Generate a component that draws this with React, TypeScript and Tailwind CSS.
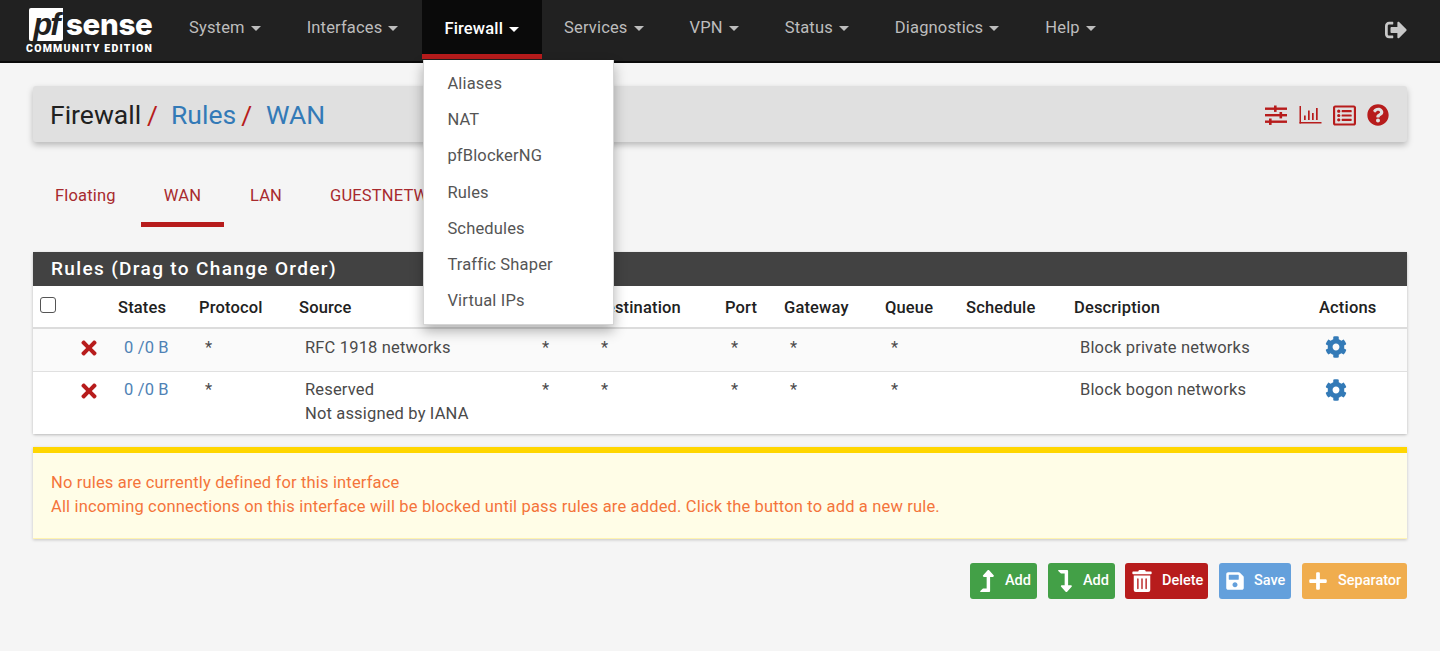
import React from "react";
import { FaCog, FaLevelDownAlt, FaLevelUpAlt, FaPlus, FaQuestionCircle, FaRegListAlt, FaSave, FaSignOutAlt, FaTimes, FaTrashAlt } from "react-icons/fa";

const nav = ["System", "Interfaces", "Firewall", "Services", "VPN", "Status", "Diagnostics", "Help"];
const menu = ["Aliases", "NAT", "pfBlockerNG", "Rules", "Schedules", "Traffic Shaper", "Virtual IPs"];
const heads: [string, string][] = [
  ["", "w-[41px]"], ["", "w-[36px]"], ["States", "w-[81px]"], ["Protocol", "w-[100px]"], ["Source", "w-[237px]"], ["Port", "w-[59px]"],
  ["Destination", "w-[130px]"], ["Port", "w-[59px]"], ["Gateway", "w-[101px]"], ["Queue", "w-[81px]"], ["Schedule", "w-[108px]"], ["Description", "w-[245px]"], ["Actions", "w-[96px]"],
];

function Sliders() {
  return (
    <svg width="24" height="20" viewBox="0 0 24 20" fill="#b71c1c">
      <rect x="1" y="2.5" width="22" height="2.4" />
      <rect x="1" y="9" width="22" height="2.4" />
      <rect x="1" y="15.5" width="22" height="2.4" />
      <rect x="10" y="0.5" width="2.6" height="6.4" />
      <rect x="15.5" y="7" width="2.6" height="6.4" />
      <rect x="5" y="13.5" width="2.6" height="6.4" />
    </svg>
  );
}
function Chart() {
  return (
    <svg width="23" height="20" viewBox="0 0 23 20" fill="#b71c1c">
      <rect x="0.5" y="1" width="1.5" height="17.5" />
      <rect x="0.5" y="17" width="22" height="1.5" />
      <rect x="5" y="10.5" width="1.7" height="4.5" />
      <rect x="9" y="5.5" width="1.7" height="9.5" />
      <rect x="13" y="8" width="1.7" height="7" />
      <rect x="17" y="3" width="1.7" height="12" />
    </svg>
  );
}

function Row({ source, desc, h, pt }: { source: React.ReactNode; desc: string; h: string; pt: string }) {
  const cell = `pl-[14px] ${pt} align-top leading-[24px]`;
  return (
    <tr className={`${h} border-b border-[#e0e0e0] last:border-b-0 bg-[#fafafa] last:bg-white text-[#4a4a4a]`}>
      <td />
      <td className="pl-[4px] pt-[8px] align-top"><FaTimes className="text-[#b71c1c]" size={22} /></td>
      <td className={`${cell} text-[#4f82b5]`}>0 /0 B</td>
      <td className={cell}>*</td>
      <td className={cell}>{source}</td>
      <td className={cell}>*</td>
      <td className={cell}>*</td>
      <td className={cell}>*</td>
      <td className={cell}>*</td>
      <td className={cell}>*</td>
      <td className={cell} />
      <td className={cell}>{desc}</td>
      <td className="pl-[14px] pt-[7px] align-top"><FaCog className="text-[#337ab7]" size={22} /></td>
    </tr>
  );
}

function Btn({ bg, icon, label, w, gap }: { bg: string; icon: React.ReactNode; label: string; w: string; gap: string }) {
  return (
    <button className={`${bg} ${w} ${gap} h-[36px] rounded-[3px] flex items-center pl-[6px] text-white text-[14.5px] font-medium leading-none tracking-normal`}>
      {icon}
      <span className="pt-[1px]">{label}</span>
    </button>
  );
}

export default function App() {
  return (
    <div className="min-h-[651px] bg-[#f5f5f5] font-['Roboto',sans-serif] text-[16.5px] tracking-[0.16px] text-[#212121] overflow-hidden">
      <nav className="h-[63px] bg-[#212121] border-b-2 border-[#0a0a0a] flex items-stretch">
        <div className="w-[166px] shrink-0 flex flex-col items-start pl-[26px] pt-[8px]">
          <div className="flex items-center h-[33px] pl-[3px]">
            <span className="w-[34px] h-[33px] bg-white rounded-[2px] rounded-tr-[0px] flex items-end justify-center font-['Liberation_Sans',sans-serif] italic font-bold text-[#212121] text-[31px] leading-[33px] tracking-[-2px]">pf</span>
            <span className="ml-[3px] font-['Inter',sans-serif] font-extrabold text-white text-[29.5px] leading-[35px] tracking-[-0.3px]">sense</span>
          </div>
          <span className="mt-[1px] font-['Roboto',sans-serif] font-black text-white text-[10.5px] leading-[13px] tracking-[1.25px] whitespace-nowrap">COMMUNITY EDITION</span>
        </div>
        {nav.map((n) => {
          const active = n === "Firewall";
          return (
            <div key={n} className={`relative h-[59px] px-[23px] flex items-center whitespace-nowrap ${active ? "bg-[#0a0a0a] text-white font-medium border-b-[5px] border-[#b71c1c] pt-[5px] ml-[1px] -mr-[1px] pl-[22px]" : "pb-[3px] text-[#bdbdbd]"}`}>
              {n}
              <span className={`ml-[6px] w-0 h-0 border-x-[5px] border-x-transparent border-t-[5px] ${active ? "border-t-white" : "border-t-[#bdbdbd]"}`} />
              {active && (
                <div className="absolute left-[1px] top-[60px] w-[191px] h-[265px] bg-white z-10 shadow-[0_6px_12px_rgba(0,0,0,0.3)] border border-[#d5d5d5] border-t-0 pt-[6px] font-normal">
                  {menu.map((m) => (
                    <div key={m} className="h-[36.2px] pl-[23px] leading-[36px] text-[#555555]">{m}</div>
                  ))}
                </div>
              )}
            </div>
          );
        })}
        <div className="ml-auto pr-[33px] flex items-center text-[#c8c8c8] pb-[2px]"><FaSignOutAlt size={22} /></div>
      </nav>

      <main className="px-[33px]">
        <div className="mt-[23px] h-[56px] bg-[#e0e0e0] rounded-[3px] shadow-[0_3px_6px_rgba(0,0,0,0.25)] flex items-center pl-[17px] pr-[18px] text-[26.5px] tracking-normal pt-[2px]">
          <span className="text-[#212121]">Firewall</span>
          <span className="text-[#b71c1c] ml-[6px]">/</span>
          <span className="text-[#337ab7] ml-[13px]">Rules</span>
          <span className="text-[#b71c1c] ml-[5px]">/</span>
          <span className="text-[#337ab7] ml-[14px]">WAN</span>
          <div className="ml-auto flex items-center gap-[11px]">
            <Sliders />
            <Chart />
            <FaRegListAlt className="text-[#b71c1c]" size={23} />
            <FaQuestionCircle className="text-[#b71c1c]" size={22} />
          </div>
        </div>

        <div className="mt-[30px] h-[55px] flex items-start text-[#a82a2e]">
          <div className="pt-[12px] pl-[22px] w-[108px]">Floating</div>
          <div className="pt-[12px] w-[83px] h-[55px] text-center border-b-[5px] border-[#b71c1c]">WAN</div>
          <div className="pt-[12px] pl-[26px] w-[106px]">LAN</div>
          <div className="pt-[12px]">GUESTNETWORK</div>
        </div>

        <section className="mt-[25px] bg-white rounded-[2px] shadow-[0_1px_3px_rgba(0,0,0,0.25)]">
          <h2 className="h-[34px] bg-[#424242] pl-[18px] text-white text-[19px] font-medium leading-[34px] tracking-[1.35px]">Rules (Drag to Change Order)</h2>
          <table className="w-full table-fixed border-collapse">
            <colgroup>{heads.map((h, i) => <col key={i} className={h[1]} />)}</colgroup>
            <thead>
              <tr className="h-[42px] border-b-2 border-[#dcdcdc]">
                <th className="pl-[7px] text-left align-top pt-[11px]"><span className="block w-[16px] h-[16px] border border-[#555] rounded-[3px] bg-white" /></th>
                {heads.slice(1).map((h, i) => (
                  <th key={i} className="pl-[8px] pt-[3px] text-left font-medium text-[#212121] whitespace-nowrap">{h[0]}</th>
                ))}
              </tr>
            </thead>
            <tbody>
              <Row h="h-[43px]" pt="pt-[7px]" source="RFC 1918 networks" desc="Block private networks" />
              <Row h="h-[63px]" pt="pt-[6px]" source={<>Reserved<br />Not assigned by IANA</>} desc="Block bogon networks" />
            </tbody>
          </table>
        </section>

        <div className="mt-[13px] h-[92px] bg-[#fffde7] border-t-[6px] border-b border-t-[#ffd600] border-b-[#fff3b0] shadow-[0_1px_3px_rgba(0,0,0,0.2)] pl-[18px] pt-[18px] text-[#f4743b] leading-[24px]">
          <div>No rules are currently defined for this interface</div>
          <div>All incoming connections on this interface will be blocked until pass rules are added. Click the button to add a new rule.</div>
        </div>

        <div className="mt-[24px] flex justify-end gap-[11px]">
          <Btn bg="bg-[#43a047]" w="w-[67px]" gap="gap-[7px]" label="Add" icon={<FaLevelUpAlt size={22} />} />
          <Btn bg="bg-[#43a047] -mr-[1px]" w="w-[67px]" gap="gap-[7px]" label="Add" icon={<FaLevelDownAlt size={22} />} />
          <Btn bg="bg-[#b71c1c]" w="w-[83px]" gap="gap-[9px]" label="Delete" icon={<FaTrashAlt size={22} />} />
          <Btn bg="bg-[#64a0dc]" w="w-[72px]" gap="gap-[9px]" label="Save" icon={<FaSave size={20} />} />
          <Btn bg="bg-[#f0ad4e]" w="w-[105px]" gap="gap-[10px]" label="Separator" icon={<FaPlus size={20} />} />
        </div>
      </main>
    </div>
  );
}
